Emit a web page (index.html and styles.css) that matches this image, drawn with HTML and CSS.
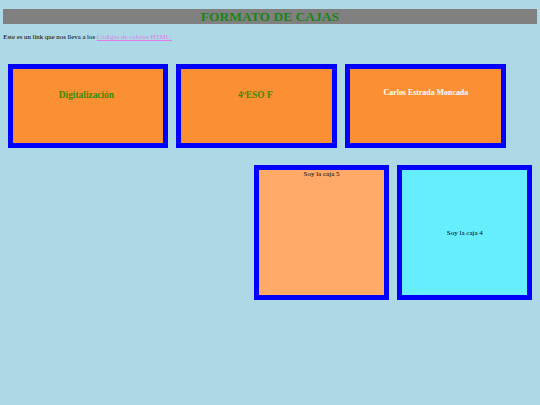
FILE: index.html
```html
<!DOCTYPE html>
<html lang="es">
<head>
<meta charset="utf-8">
<title>Formato de cajas</title>
<link rel="stylesheet" href="styles.css">
</head>
<body>
<h1 class="title">FORMATO DE CAJAS</h1>
<p class="intro">Este es un link que nos lleva a los <a class="link" href="#">Códigos de colores HTML:</a></p>
<div class="row-top">
  <div class="box box-orange"><h2 class="box-heading">Digitalización</h2></div>
  <div class="box box-orange"><h2 class="box-heading">4ºESO F</h2></div>
  <div class="box box-orange"><h3 class="box-name">Carlos Estrada Moncada</h3></div>
</div>
<div class="row-bottom">
  <div class="square square-light"><span class="square-top">Soy la caja 5</span></div>
  <div class="square square-cyan"><span>Soy la caja 4</span></div>
</div>
</body>
</html>
```
FILE: styles.css
```css
html, body {
  margin: 0;
  padding: 0;
}
body {
  background: #add8e6;
  font-family: "Liberation Serif", "Times New Roman", serif;
  color: #000;
  width: 540px;
  height: 405px;
  overflow: hidden;
}
.title {
  margin: 9px 3.3px 0 3.3px;
  height: 15px;
  line-height: 16px;
  background: #808080;
  color: #1a841a;
  font-size: 13.5px;
  font-weight: bold;
  text-align: center;
}
.intro {
  margin: 9px 0 0 3.3px;
  font-size: 6.8px;
  line-height: 8px;
}
.link {
  color: #e07be8;
  text-decoration: underline;
}
.row-top {
  display: flex;
  gap: 8.2px;
  margin-top: 23px;
  padding-left: 7.5px;
}
.box {
  box-sizing: border-box;
  width: 160.8px;
  height: 84px;
  border: 5px solid #0000ff;
  text-align: center;
  padding-right: 3px;
}
.box-orange {
  background: #fb8f33;
}
.box-heading {
  margin: 0;
  padding-top: 21px;
  font-size: 9.4px;
  line-height: 11px;
  font-weight: bold;
  color: #3d8a06;
}
.box-name {
  margin: 0;
  padding-top: 19px;
  padding-left: 3px;
  font-size: 7.9px;
  line-height: 10px;
  font-weight: bold;
  color: #ffffff;
}
.row-bottom {
  display: flex;
  justify-content: flex-end;
  gap: 8.3px;
  margin-top: 17px;
  padding-right: 7.7px;
}
.square {
  box-sizing: border-box;
  width: 135px;
  height: 135px;
  border: 5px solid #0000ff;
  font-size: 7px;
  line-height: 8px;
  text-align: center;
}
.square-light {
  background: #ffaa66;
}
.square-top {
  display: block;
}
.square-cyan {
  background: #66eeff;
  display: flex;
  align-items: center;
  justify-content: center;
}
```
